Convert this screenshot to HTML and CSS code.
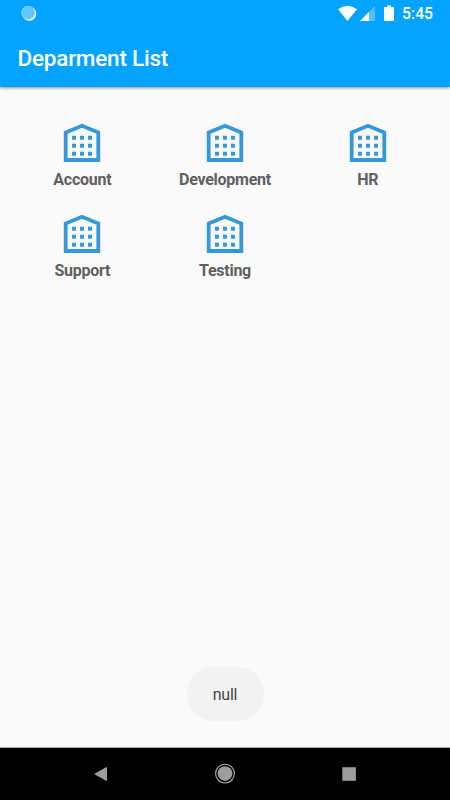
FILE: index.html
```html
<!DOCTYPE html>
<html lang="en">

<head>
	<meta charset="UTF-8">
	<meta name="viewport" content="width=device-width, initial-scale=1.0">
	<title>Deparment List</title>
	<link rel="stylesheet" href="styles.css">
</head>

<body>

	<svg class="symbols" width="0" height="0">
		<symbol id="building" viewBox="0 0 40 42">
			<path d="M3.7 38V10.6L20 3.8L36.3 10.6V38Z" fill="none" stroke="#3498db" stroke-width="3.8" />
			<path d="M12 13.8V34M20 13.8V34M28 13.8V34" fill="none" stroke="#3498db" stroke-width="4" stroke-dasharray="4 4" />
		</symbol>
	</svg>

	<header class="app-header">
		<div class="status-bar">
			<svg class="sync-icon" width="16" height="16" viewBox="0 0 16 16">
				<circle cx="8.3" cy="7.8" r="7" fill="#fff" />
				<circle cx="7.1" cy="6.6" r="6.8" fill="#62c5ff" />
				<circle cx="7.1" cy="6.6" r="6.3" fill="none" stroke="#9bdaff" stroke-dasharray="1 1" />
			</svg>
			<svg width="56" height="18" viewBox="0 0 56 18">
				<path d="M0 4.2Q9.5-2.8 19 4.2L9.5 16Z" fill="#fff" />
				<path d="M37 1V16H22Z" fill="#57bfff" />
				<path d="M31 7V16H22Z" fill="#fff" />
				<path d="M49 0.5h4v1.6h2q1 0 1 1V15q0 1-1 1h-8q-1 0-1-1V3.1q0-1 1-1h2Z" fill="#fff" />
			</svg>
			<span class="clock">5:45</span>
		</div>
		<h1>Deparment List</h1>
	</header>

	<main class="departments">
		<div class="department">
			<svg class="department-icon"><use href="#building" /></svg>
			<span>Account</span>
		</div>
		<div class="department">
			<svg class="department-icon"><use href="#building" /></svg>
			<span>Development</span>
		</div>
		<div class="department">
			<svg class="department-icon"><use href="#building" /></svg>
			<span>HR</span>
		</div>
		<div class="department">
			<svg class="department-icon"><use href="#building" /></svg>
			<span>Support</span>
		</div>
		<div class="department">
			<svg class="department-icon"><use href="#building" /></svg>
			<span>Testing</span>
		</div>
	</main>

	<div class="toast">null</div>

	<nav class="nav-bar">
		<svg width="22" height="22" viewBox="0 0 22 22">
			<path d="M4 11L17 3.7V18.3Z" fill="#9c9c9c" />
		</svg>
		<svg width="22" height="22" viewBox="0 0 22 22">
			<circle cx="11" cy="10.6" r="9.4" fill="none" stroke="#b0b0b0" stroke-width="1.1" />
			<circle cx="11" cy="10.6" r="7.4" fill="#9c9c9c" />
		</svg>
		<svg width="22" height="22" viewBox="0 0 22 22">
			<path d="M4.3 4.2h13.6v13.6H4.3Z" fill="#9c9c9c" />
		</svg>
	</nav>

</body>

</html>
```
FILE: styles.css
```css
body {
	display: flex;
	flex-direction: column;
	height: 800px;
	margin: 0;
	overflow: hidden;
	background-color: #fafafa;
	font-family: Roboto, "Liberation Sans", sans-serif;
}

.symbols {
	position: absolute;
}

.app-header {
	height: 87px;
	background-color: #03a4ff;
	box-shadow: 0 1px 3px rgba(0, 0, 0, 0.45);
	color: #fff;
}

.status-bar {
	display: flex;
	align-items: center;
	height: 27px;
	padding: 0 17px 0 21px;
}

.sync-icon {
	margin-right: auto;
}

.clock {
	margin-left: 8px;
	font-size: 15.7px;
	font-weight: 500;
	line-height: 28px;
}

h1 {
	margin: 0;
	padding: 16px 17.5px;
	font-size: 22.5px;
	font-weight: 500;
	letter-spacing: -0.22px;
	line-height: 30px;
}

/* --- Department grid --- */
.departments {
	display: grid;
	grid-template-columns: repeat(3, 1fr);
	grid-auto-rows: 91.3px;
	padding: 35px 11px 0;
}

.department {
	display: flex;
	flex-direction: column;
	align-items: center;
	color: #606060;
	font-size: 16px;
	font-weight: 700;
	letter-spacing: -0.25px;
	line-height: 20px;
}

.department-icon {
	width: 40px;
	height: 42px;
	margin-bottom: 6px;
}

.toast {
	align-self: center;
	width: 77px;
	height: 54px;
	margin-top: auto;
	margin-bottom: 26px;
	border-radius: 26px;
	background-color: #f2f2f2;
	color: #444;
	font-size: 16px;
	letter-spacing: -0.2px;
	line-height: 56px;
	text-align: center;
}

/* --- System navigation --- */
.nav-bar {
	display: flex;
	justify-content: space-between;
	align-items: center;
	box-sizing: border-box;
	height: 53px;
	padding: 0 90px;
	border-top: 1px solid #aaa;
	background-color: #000;
}
```
